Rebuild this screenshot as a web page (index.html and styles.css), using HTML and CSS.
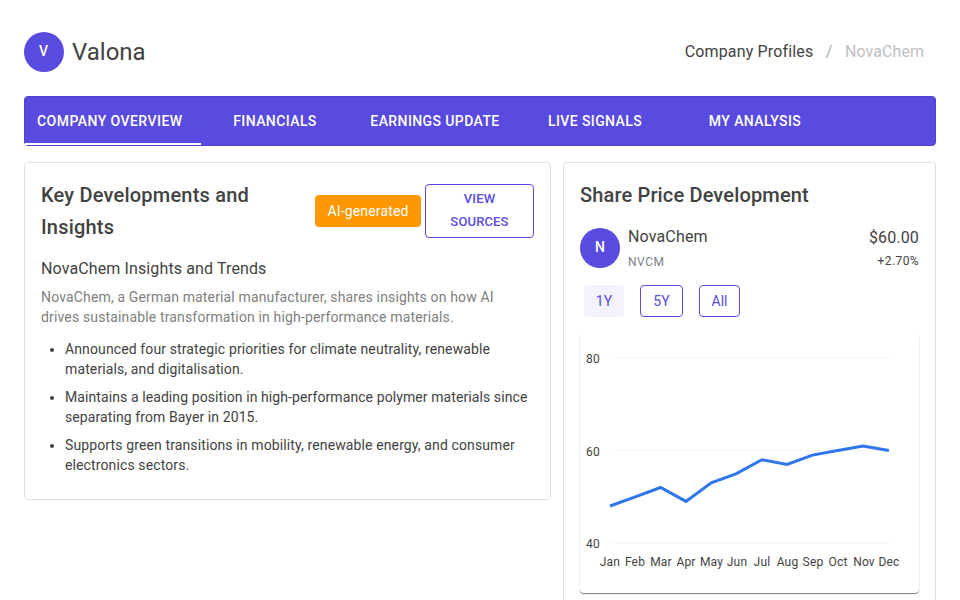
FILE: index.html
```html
<!DOCTYPE html>
<html lang="en">
<head>
<meta charset="utf-8">
<title>Valona</title>
<link rel="stylesheet" href="styles.css">
</head>
<body>
<header class="header">
  <div class="brand"><span class="avatar avatar-brand">V</span><h1 class="brand-name">Valona</h1></div>
  <nav class="crumbs"><span>Company Profiles</span><span class="sep">/</span><span class="current">NovaChem</span></nav>
</header>
<nav class="tabs">
  <a class="tab active">Company Overview</a>
  <a class="tab">Financials</a>
  <a class="tab">Earnings Update</a>
  <a class="tab">Live Signals</a>
  <a class="tab">My Analysis</a>
</nav>
<main class="columns">
  <section class="card insights">
    <div class="card-head">
      <h2 class="title">Key Developments and Insights</h2>
      <div class="actions"><span class="badge">AI-generated</span><button class="sources">View Sources</button></div>
    </div>
    <h3 class="subtitle">NovaChem Insights and Trends</h3>
    <p class="summary">NovaChem, a German material manufacturer, shares insights on how AI drives sustainable transformation in high-performance materials.</p>
    <ul class="points">
      <li>Announced four strategic priorities for climate neutrality, renewable materials, and digitalisation.</li>
      <li>Maintains a leading position in high-performance polymer materials since separating from Bayer in 2015.</li>
      <li>Supports green transitions in mobility, renewable energy, and consumer electronics sectors.</li>
    </ul>
  </section>
  <section class="card share">
    <h2 class="title">Share Price Development</h2>
    <div class="quote">
      <span class="avatar">N</span>
      <div class="company"><div class="name">NovaChem</div><div class="ticker">NVCM</div></div>
      <div class="price"><div class="value">$60.00</div><div class="change">+2.70%</div></div>
    </div>
    <div class="ranges"><button class="range selected">1Y</button><button class="range">5Y</button><button class="range">All</button></div>
    <div class="chart">
      <svg width="339" height="260" viewBox="0 0 339 260">
        <g class="grid"><path d="M31 23.500H309M31 116.500H309M31 209.500H309"/></g>
        <g class="axis axis-y"><text x="20" y="29">80</text><text x="20" y="122">60</text><text x="20" y="214">40</text></g>
        <g class="axis axis-x">
          <text x="30" y="232">Jan</text><text x="55" y="232">Feb</text><text x="81" y="232">Mar</text><text x="106" y="232">Apr</text><text x="131.500" y="232">May</text><text x="157" y="232">Jun</text><text x="182" y="232">Jul</text><text x="207.500" y="232">Aug</text><text x="233" y="232">Sep</text><text x="258" y="232">Oct</text><text x="284" y="232">Nov</text><text x="309" y="232">Dec</text>
        </g>
        <polyline class="line" points="30,172 55.300,162.800 80.600,153.500 106,167.400 131.200,148.900 156.500,139.600 181.800,125.800 207.100,130.400 232.400,121.100 257.700,116.500 283,111.900 309,116.500"/>
      </svg>
    </div>
  </section>
</main>
</body>
</html>
```
FILE: styles.css
```css
* { box-sizing: border-box; }
html { overflow: hidden; }
body { margin: 0; padding: 24px 24px 0; height: 600px; overflow: hidden; background: #fff; color: #424242; font: 14px/20px Roboto, sans-serif; letter-spacing: 0.15px; }
h1, h2, h3, p, ul { margin: 0; }
.header { display: flex; justify-content: space-between; align-items: center; height: 56px; padding-right: 12px; }
.brand { display: flex; align-items: center; gap: 8px; }
.avatar { display: flex; align-items: center; justify-content: center; flex: none; width: 40px; height: 40px; padding-bottom: 2px; border-radius: 50%; background: #5a4be0; color: #fff; font-size: 14px; font-weight: 500; }
.avatar-brand { padding-right: 1px; }
.brand-name { font-size: 24px; line-height: 32px; font-weight: 400; letter-spacing: 0; }
.crumbs { display: flex; font-size: 16px; line-height: 24px; }
.sep { margin: 0 12.5px 0 12.5px; color: #aaa; }
.current { color: #c0c0c0; letter-spacing: 0.05px; }
.tabs { display: flex; height: 50px; margin: 16px 0; border: 1px solid #5143d0; border-radius: 4px; background: #5a4be0; }
.tab { display: flex; align-items: center; justify-content: center; height: 48px; padding: 0 12px; color: #fff; font-weight: 500; letter-spacing: 0.4px; text-transform: uppercase; }
.tab:nth-child(1) { width: 176px; justify-content: flex-start; letter-spacing: 0.45px; }
.tab:nth-child(2) { width: 148px; }
.tab:nth-child(3) { width: 172px; }
.tab:nth-child(4) { width: 148px; }
.tab:nth-child(5) { width: 172px; }
.active { border-bottom: 2px solid #fff; padding-top: 2px; }
.columns { display: grid; grid-template-columns: 527px 373px; gap: 12px; align-items: start; }
.card { padding: 16px; border: 1px solid #e0e0e0; border-radius: 4px; background: #fff; }
.insights { height: 338px; }
.card-head { display: flex; align-items: center; height: 64px; }
.title { font-size: 20px; line-height: 32px; font-weight: 500; }
.card-head .title { width: 274px; padding-right: 50px; letter-spacing: 0.2px; }
.actions { display: flex; align-items: center; gap: 4px; }
.badge { display: flex; align-items: center; justify-content: center; width: 106px; height: 32px; border-radius: 4px; background: #ff9800; color: #fff; }
.sources { width: 109px; height: 54px; padding: 0 20px 2px; border: 1px solid #5a4be0; border-radius: 4px; background: #fff; color: #5a4be0; font: 500 13px/23px Roboto, sans-serif; letter-spacing: 0.15px; text-transform: uppercase; }
.subtitle { margin-top: 14px; font-size: 16px; line-height: 24px; font-weight: 400; letter-spacing: 0.12px; }
.summary { margin-top: 6px; color: #808080; }
.points { margin-top: 12px; padding-left: 24px; letter-spacing: 0.12px; }
.points li { margin-bottom: 8px; }
.points li:nth-child(2) { letter-spacing: 0.09px; }
.share { height: 438px; border-bottom: 0; border-radius: 4px 4px 0 0; padding-bottom: 0; }
.quote { display: flex; height: 50px; margin-top: 12px; align-items: center; gap: 8px; }
.company { flex: 1; }
.name { font-size: 16px; line-height: 26px; padding-top: 1px; }
.value { font-size: 16px; line-height: 25px; }
.ticker { color: #808080; font-size: 12px; line-height: 24px; letter-spacing: 0.5px; }
.price { text-align: right; }
.change { font-size: 12px; line-height: 22px; letter-spacing: 0.4px; }
.ranges { display: flex; gap: 16px; margin: 12px 0 17px 4px; }
.range { width: 43px; height: 32px; padding: 0; border: 1px solid #5a4be0; border-radius: 4px; background: #fff; color: #5a4be0; font: 14px Roboto, sans-serif; }
.range:last-child { width: 41px; }
.range.selected { width: 40px; border-color: #f4f2fc; background: #f4f2fc; }
.chart { width: 339px; height: 259px; border-radius: 4px; box-shadow: 0 1px 1px rgba(0,0,0,.45), 0 1px 2px rgba(0,0,0,.1); }
.chart svg { display: block; }
.axis { fill: #424242; font-size: 12px; letter-spacing: 0.2px; }
.axis-y { text-anchor: end; }
.axis-x { text-anchor: middle; }
.grid { stroke: #f6f6f6; }
.line { fill: none; stroke: #2f76ee; stroke-width: 3; }
```
